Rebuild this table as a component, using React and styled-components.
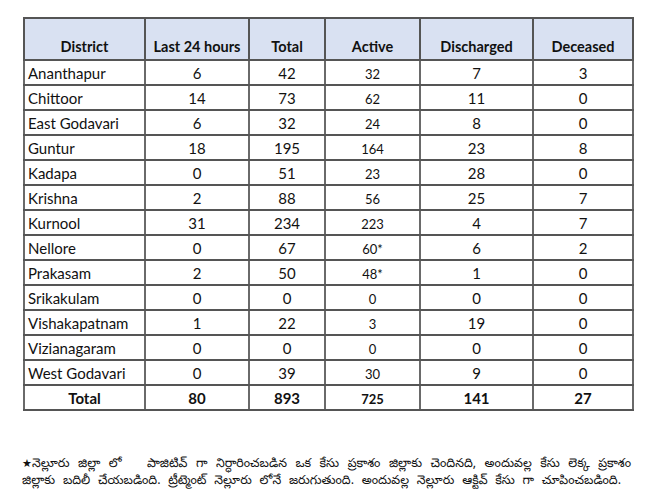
import React from "react";
import styled, { createGlobalStyle } from "styled-components";

const Global = createGlobalStyle`
  html, body { margin: 0; padding: 0; background: #fff; }
  body { width: 650px; height: 500px; overflow: hidden; }
`;

const Page = styled.div`
  width: 650px;
  height: 500px;
  padding: 17px 0 0 23px;
  box-sizing: border-box;
  font-family: Lato, "Liberation Sans", sans-serif;
  color: #111;
`;

const Table = styled.table`
  width: 609px;
  border-collapse: collapse;
  table-layout: fixed;
`;

const Head = styled.th`
  background: #d9e1f2;
  border: 2px solid #555;
  height: 37px;
  line-height: 18px;
  vertical-align: bottom;
  padding: 0 0 3px;
  font-size: 14.5px;
  font-weight: 700;
  text-align: center;
`;

const Cell = styled.td`
  border: 2px solid #555;
  border-left-color: #6a6a6a;
  border-right-color: #6a6a6a;
  height: 22px;
  line-height: 18px;
  padding: 0 ${(p) => (p.$name ? "3px" : "0")};
  padding-bottom: ${(p) => (p.$small ? "1px" : "0")};
  font-size: ${(p) => (p.$small ? "13px" : "15px")};
  font-weight: ${(p) => (p.$bold ? 700 : 400)};
  text-align: ${(p) => (p.$name && !p.$bold ? "left" : "center")};
  vertical-align: ${(p) => (p.$small ? "bottom" : "middle")};
  white-space: nowrap;
`;

const Note = styled.div`
  margin: 44px 0 0 -1px;
  width: 609px;
  font-family: "Noto Sans Telugu", "Noto Sans", Lato, sans-serif;
  font-size: 12.5px;
  line-height: 17px;
  color: #111;
`;

const NoteLine = styled.div`
  white-space: nowrap;
  text-align: justify;
  text-align-last: justify;
  text-justify: inter-word;
  margin-right: ${(p) => (p.$short ? "10px" : "0")};
`;

const Lead = styled.span`
  display: inline-block;
`;

const Star = styled.span`
  font-family: "DejaVu Sans", sans-serif;
  font-size: 11px;
`;

const cols = [121, 104, 76, 95, 113, 100];

const rows = [
  ["Ananthapur", 6, 42, "32", 7, 3],
  ["Chittoor", 14, 73, "62", 11, 0],
  ["East Godavari", 6, 32, "24", 8, 0],
  ["Guntur", 18, 195, "164", 23, 8],
  ["Kadapa", 0, 51, "23", 28, 0],
  ["Krishna", 2, 88, "56", 25, 7],
  ["Kurnool", 31, 234, "223", 4, 7],
  ["Nellore", 0, 67, "60*", 6, 2],
  ["Prakasam", 2, 50, "48*", 1, 0],
  ["Srikakulam", 0, 0, "0", 0, 0],
  ["Vishakapatnam", 1, 22, "3", 19, 0],
  ["Vizianagaram", 0, 0, "0", 0, 0],
  ["West Godavari", 0, 39, "30", 9, 0],
];

export default function App() {
  return (
    <Page>
      <Global />
      <Table>
        <colgroup>
          {cols.map((w, i) => (
            <col key={i} style={{ width: w }} />
          ))}
        </colgroup>
        <thead>
          <tr>
            {["District", "Last 24 hours", "Total", "Active", "Discharged", "Deceased"].map((h) => (
              <Head key={h}>{h}</Head>
            ))}
          </tr>
        </thead>
        <tbody>
          {rows.map((r) => (
            <tr key={r[0]}>
              <Cell $name>{r[0]}</Cell>
              <Cell>{r[1]}</Cell>
              <Cell>{r[2]}</Cell>
              <Cell $small>{r[3]}</Cell>
              <Cell>{r[4]}</Cell>
              <Cell>{r[5]}</Cell>
            </tr>
          ))}
          <tr>
            <Cell $name $bold>Total</Cell>
            <Cell $bold>80</Cell>
            <Cell $bold>893</Cell>
            <Cell $bold $small>725</Cell>
            <Cell $bold>141</Cell>
            <Cell $bold>27</Cell>
          </tr>
        </tbody>
      </Table>
      <Note>
        <NoteLine>
          <Lead><Star>★</Star>నెల్లూరు</Lead> జిల్లా లో&nbsp;&nbsp; పాజిటివ్ గా నిర్ధారించబడిన ఒక కేసు ప్రకాశం జిల్లాకు చెందినది, అందువల్ల కేసు లెక్క ప్రకాశం
        </NoteLine>
        <NoteLine $short>
          జిల్లాకు బదిలీ చేయబడింది. ట్రీట్మెంట్ నెల్లూరు లోనే జరుగుతుంది. అందువల్ల నెల్లూరు ఆక్టివ్ కేసు గా చూపించబడింది.
        </NoteLine>
      </Note>
    </Page>
  );
}
